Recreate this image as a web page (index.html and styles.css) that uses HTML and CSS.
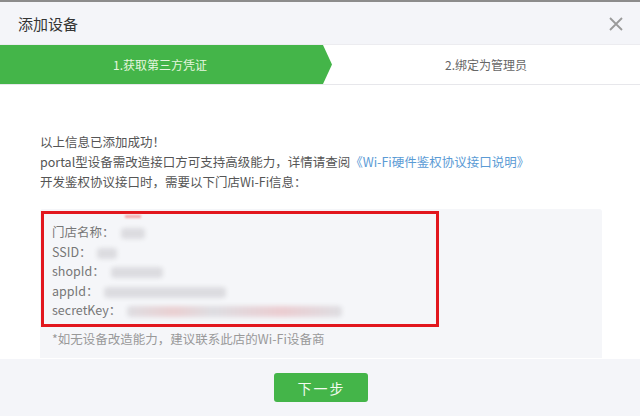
FILE: index.html
```html
<!DOCTYPE html>
<html lang="zh-CN">
<head>
    <meta charset="UTF-8">
    <title>添加设备</title>
    <link rel="stylesheet" href="styles.css">
</head>
<body>
    <div class="dialog">
        <div class="dialog-hd">
            <h3 class="dialog-title">添加设备</h3>
            <span class="close-btn">
                <svg width="14" height="14" viewBox="0 0 14 14"><path d="M1 1 L13 13 M13 1 L1 13" stroke="#9a9a9a" stroke-width="1.8" fill="none"/></svg>
            </span>
        </div>

        <div class="steps">
            <div class="step active">1.获取第三方凭证</div>
            <div class="step">2.绑定为管理员</div>
        </div>

        <div class="dialog-bd">
            <div class="msg">
                <p>以上信息已添加成功！</p>
                <p>portal型设备需改造接口方可支持高级能力，详情请查阅<a class="link" href="#">《Wi-Fi硬件鉴权协议接口说明》</a></p>
                <p>开发鉴权协议接口时，需要以下门店Wi-Fi信息：</p>
            </div>

            <div class="info-box">
                <div class="info-list">
                    <span class="mark"></span>
                    <div class="info-row">门店名称：<span class="blur w1"></span></div>
                    <div class="info-row">SSID：<span class="blur w2"></span></div>
                    <div class="info-row">shopId：<span class="blur w3"></span></div>
                    <div class="info-row">appId：<span class="blur w4"></span></div>
                    <div class="info-row">secretKey：<span class="blur w5"></span></div>
                </div>
                <p class="tip">*如无设备改造能力，建议联系此店的Wi-Fi设备商</p>
            </div>
        </div>

        <div class="dialog-ft">
            <button class="btn-primary">下一步</button>
        </div>
    </div>
</body>
</html>
```

FILE: styles.css
```css
* {
    margin: 0;
    padding: 0;
    box-sizing: border-box;
}

body {
    font-family: "Noto Sans CJK SC", "Noto Sans", sans-serif;
    font-size: 12.5px;
    color: #555;
    background: #fff;
    width: 640px;
    height: 416px;
    overflow: hidden;
}

.dialog {
    display: flex;
    flex-direction: column;
    height: 416px;
}

.dialog-hd {
    height: 44px;
    border-top: 2px solid #8c8c8c;
    background: #f4f5f9;
    display: flex;
    align-items: center;
    justify-content: space-between;
    padding: 0 17px 0 18px;
}

.dialog-title {
    font-size: 15px;
    font-weight: normal;
    color: #353535;
}

.close-btn {
    display: flex;
    margin-top: 2px;
}

.steps {
    display: flex;
    height: 41px;
    border-top: 1px solid #ececf0;
    border-bottom: 1px solid #e7e7eb;
    background: #fff;
}

.step {
    flex: 1;
    display: flex;
    align-items: center;
    justify-content: center;
    color: #666;
    font-size: 12px;
}

.step.active {
    flex: 0 0 332px;
    padding-right: 12px;
    background: #44b549;
    color: #e6f6df;
    clip-path: polygon(0 0, 323px 0, 100% 50%, 323px 100%, 0 100%);
}

.dialog-bd {
    flex: 1;
    padding: 47px 38px 0 40px;
}

.msg p {
    line-height: 20px;
    color: #555;
}

.link {
    color: #5b9bd5;
    text-decoration: none;
}

.info-box {
    margin-top: 17px;
    background: #f5f6f9;
    border-radius: 3px 3px 0 0;
    padding: 2px 0 10px 1px;
    height: 149px;
}

.info-list {
    position: relative;
    width: 398px;
    border: 3px solid #e2171e;
    padding: 8px 8px 4px 8px;
}

.info-row {
    line-height: 19.5px;
    color: #777;
}

.blur {
    display: inline-block;
    height: 11px;
    margin-left: 6px;
    vertical-align: middle;
    background: #dcdce0;
    border-radius: 4px;
    filter: blur(2px);
}

.w1 { width: 24px; }
.w2 { width: 20px; }
.w3 { width: 52px; }
.w4 { width: 122px; }
.w5 { width: 215px; background: linear-gradient(90deg, #dedee2 0, #ead0d2 22%, #dedee2 40%, #ebcdd1 72%, #dedee2 100%); }

.mark {
    position: absolute;
    left: 81px;
    top: 1px;
    width: 16px;
    height: 3px;
    background: #f0a8aa;
    filter: blur(1px);
}

.tip {
    margin-top: 2px;
    padding-left: 11px;
    line-height: 20px;
    color: #999;
}

.dialog-ft {
    height: 57px;
    background: #f4f5f9;
    display: flex;
    justify-content: center;
    padding-top: 14px;
}

.btn-primary {
    width: 94px;
    height: 29px;
    background: #44b549;
    border: none;
    border-radius: 3px;
    color: #f2fbef;
    font-family: inherit;
    font-size: 14px;
    letter-spacing: 2px;
    text-indent: 2px;
    margin-left: 1px;
}
```
